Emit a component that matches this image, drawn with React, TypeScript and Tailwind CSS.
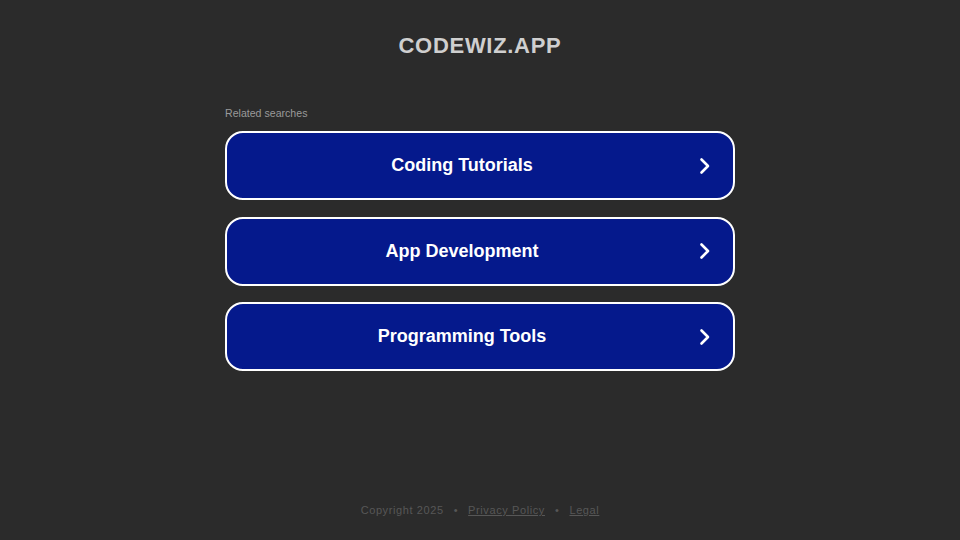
import React from "react";

const items = ["Coding Tutorials", "App Development", "Programming Tools"];

function Chevron() {
  return (
    <svg width="14" height="18" viewBox="0 0 14 18" fill="none" className="absolute right-[21px] top-1/2 -translate-y-1/2">
      <path d="M3.5 2.5 L10 9 L3.5 15.5" stroke="white" strokeWidth="2.6" strokeLinecap="round" strokeLinejoin="round" />
    </svg>
  );
}

export default function App() {
  return (
    <div className="w-[960px] h-[540px] bg-[#2b2b2b] flex flex-col items-center overflow-hidden" style={{ fontFamily: '"Liberation Sans", Arial, sans-serif' }}>
      <div className="pt-[33px] text-[22px] leading-[26px] font-bold text-[#cfcfcf] tracking-[0.7px]">CODEWIZ.APP</div>
      <div className="mt-[47px] w-[510px]">
        <div className="text-[10.6px] leading-[14px] text-[#9a9a9a]">Related searches</div>
        <div className="mt-[11px] flex flex-col gap-[16.5px]">
          {items.map((t) => (
            <div key={t} className="relative h-[69px] rounded-[18px] border-2 border-white bg-[#05198c] flex items-center justify-center pr-[36px]">
              <span className="text-[18px] font-bold text-white">{t}</span>
              <Chevron />
            </div>
          ))}
        </div>
      </div>
      <div className="flex-1" />
      <div className="pb-[23px] text-[11px] leading-[14px] text-[#575757] tracking-[0.6px] flex gap-[10px]">
        <span>Copyright 2025</span>
        <span>•</span>
        <span className="underline">Privacy Policy</span>
        <span>•</span>
        <span className="underline">Legal</span>
      </div>
    </div>
  );
}
